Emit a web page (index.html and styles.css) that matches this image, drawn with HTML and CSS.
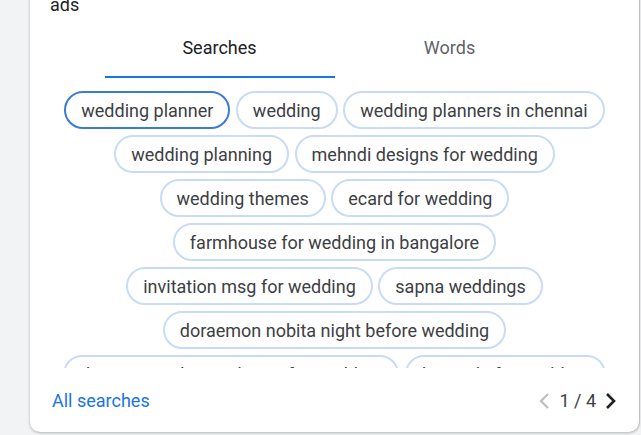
FILE: index.html
```html
<!DOCTYPE html>
<html lang="en">
<head>
<meta charset="utf-8">
<title>Searches</title>
<link rel="stylesheet" href="styles.css">
</head>
<body>
<div class="card">
  <div class="card-title">ads</div>
  <div class="tabs">
    <div class="tab tab-active">Searches</div>
    <div class="tab">Words</div>
  </div>
  <div class="chips-wrap">
    <div class="chips">
      <span class="chip chip-selected">wedding planner</span>
      <span class="chip">wedding</span>
      <span class="chip">wedding planners in chennai</span>
      <span class="chip">wedding planning</span>
      <span class="chip">mehndi designs for wedding</span>
      <span class="chip">wedding themes</span>
      <span class="chip">ecard for wedding</span>
      <span class="chip">farmhouse for wedding in bangalore</span>
      <span class="chip">invitation msg for wedding</span>
      <span class="chip">sapna weddings</span>
      <span class="chip">doraemon nobita night before wedding</span>
      <span class="chip">decoration ideas at home for wedding</span>
      <span class="chip">hairstyle for wedding</span>
    </div>
  </div>
  <div class="footer">
    <a class="all-link" href="#">All searches</a>
    <div class="pager">
      <svg class="chev chev-off" width="12" height="20" viewBox="0 0 12 20"><polyline points="10,3 3,10 10,17" fill="none" stroke="currentColor" stroke-width="2.4"/></svg>
      <span class="pager-text">1 / 4</span>
      <svg class="chev chev-on" width="12" height="20" viewBox="0 0 12 20"><polyline points="2,3 9,10 2,17" fill="none" stroke="currentColor" stroke-width="2.6"/></svg>
    </div>
  </div>
</div>
</body>
</html>
```

FILE: styles.css
```css
* { box-sizing: border-box; }
html, body { margin: 0; padding: 0; }
body {
  background: #f1f3f4;
  font-family: Roboto, "Liberation Sans", Arial, sans-serif;
  width: 641px;
  height: 435px;
  overflow: hidden;
}
.card {
  margin-left: 30px;
  margin-top: -7px;
  width: 609px;
  height: 439px;
  background: #fff;
  border-radius: 0 0 10px 10px;
  box-shadow: 0 1px 3px rgba(60, 64, 67, 0.35), 1px 0 0 #d2d4d7;
  display: flex;
  flex-direction: column;
  padding: 0 20px;
}
.card-title {
  font-size: 18px;
  line-height: 24px;
  color: #202124;
}
.tabs {
  display: flex;
  justify-content: center;
}
.tab {
  width: 230px;
  text-align: center;
  font-size: 18px;
  line-height: 22px;
  color: #5f6368;
  padding: 20px 0 17px;
  border-bottom: 2px solid transparent;
}
.tab-active {
  color: #202124;
  border-bottom-color: #1a73e8;
}
.chips-wrap {
  margin-top: 13px;
  height: 277px;
  overflow: hidden;
}
.chips {
  display: flex;
  flex-wrap: wrap;
  justify-content: center;
  column-gap: 5.5px;
  row-gap: 6px;
}
.chip {
  height: 38px;
  display: inline-flex;
  align-items: center;
  padding: 0 15px;
  border: 2px solid #c9dbf6;
  border-radius: 20px;
  font-size: 18px;
  color: #3c4043;
  white-space: nowrap;
}
.chip-selected {
  border-color: #3a7bd5;
}
.footer {
  display: flex;
  justify-content: space-between;
  align-items: center;
  padding: 21px 2px 0 2px;
  height: 45px;
  line-height: 24px;
}
.all-link {
  font-size: 18px;
  color: #1a73e8;
  text-decoration: none;
}
.pager {
  display: flex;
  align-items: center;
  gap: 9px;
}
.pager-text {
  font-size: 18px;
  color: #3c4043;
}
.chev { display: block; }
.chev-off { color: #bdc1c6; }
.chev-on { color: #202124; }
```
